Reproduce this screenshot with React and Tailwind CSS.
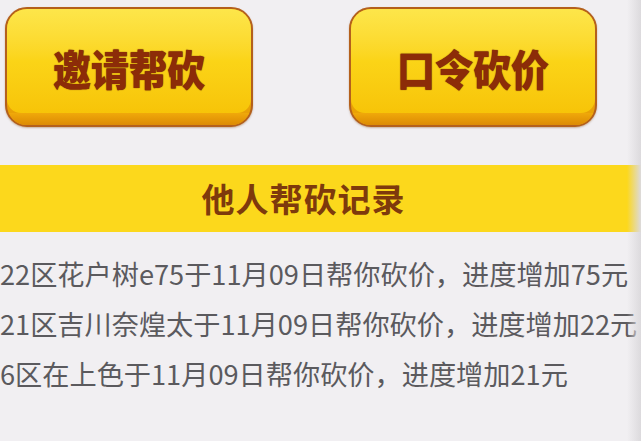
import React from 'react';

const cjk = { fontFamily: '"Noto Sans CJK SC", "Noto Sans", sans-serif' };

const records = [
  '22区花户树e75于11月09日帮你砍价，进度增加75元',
  '21区吉川奈煌太于11月09日帮你砍价，进度增加22元',
  '6区在上色于11月09日帮你砍价，进度增加21元',
];

// Glossy yellow game-style button
const GoldButton = ({ label }) => (
  <button className="relative w-[248px] h-[120px] rounded-[22px] border-2 border-[#b4601c] bg-[#e9a106] overflow-hidden shadow-[0_1px_2px_rgba(120,60,0,0.35)]">
    <div className="absolute inset-x-0 top-0 h-[104px] rounded-b-[14px] bg-gradient-to-b from-[#fde64a] via-[#fbd417] to-[#f7c408]" />
    <div className="absolute inset-x-0 bottom-0 h-[12px] bg-gradient-to-b from-[#f0a90a] to-[#dc8a04]" />
    <span
      className="relative flex items-center justify-center h-[100px] text-[38px] font-black scale-y-[1.12] text-[#8c2c08] [text-shadow:0_0_1px_#5a1a00]"
      style={cjk}
    >
      {label}
    </span>
  </button>
);

export default function App() {
  return (
    <div className="w-[641px] h-[441px] overflow-hidden bg-[#f1eff2] relative" style={cjk}>
      <div className="flex gap-[96px] pl-[5px] pt-[7px]">
        <GoldButton label="邀请帮砍" />
        <GoldButton label="口令砍价" />
      </div>

      <div className="mt-[38px] h-[67px] bg-[#fcd81c] flex items-center justify-center pr-[34px]">
        <span className="text-[33px] font-bold tracking-[1px] text-[#7e3a0c]">他人帮砍记录</span>
      </div>

      <div className="pt-[16px]">
        {records.map((r) => (
          <div key={r} className="h-[50px] leading-[50px] text-[27.2px] text-[#5b5a5e] whitespace-nowrap">
            {r}
          </div>
        ))}
      </div>

      <div className="absolute right-0 top-0 bottom-0 w-[14px] bg-gradient-to-r from-transparent to-[#dcdadd]" />
    </div>
  );
}
